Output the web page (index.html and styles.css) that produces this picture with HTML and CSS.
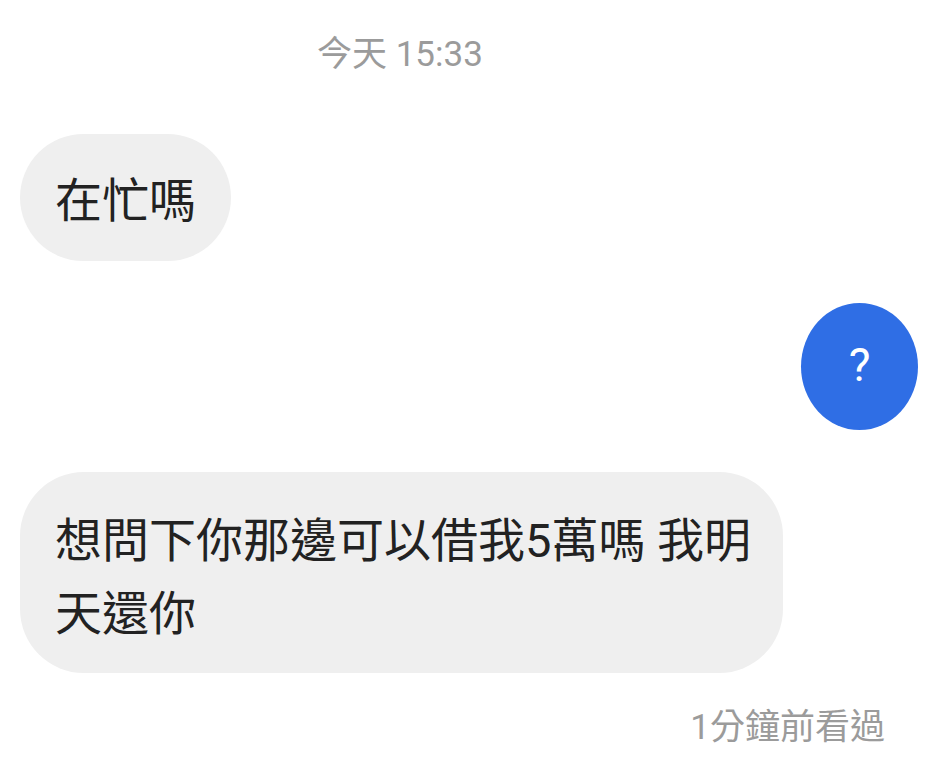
FILE: index.html
```html
<!DOCTYPE html>
<html lang="zh-Hant">
<head>
<meta charset="utf-8">
<link rel="stylesheet" href="styles.css">
</head>
<body>
<div class="chat">
  <div class="stamp">今天 15:33</div>
  <div class="row in"><div class="bubble">在忙嗎</div></div>
  <div class="row out"><div class="bubble blue">?</div></div>
  <div class="row in"><div class="bubble wide">想問下你那邊可以借我5萬嗎 我明天還你</div></div>
  <div class="seen">1分鐘前看過</div>
</div>
</body>
</html>
```
FILE: styles.css
```css
html, body {
  margin: 0;
  padding: 0;
  background: #ffffff;
}
body {
  font-family: Roboto, "Noto Sans CJK TC", sans-serif;
  width: 938px;
  height: 772px;
  overflow: hidden;
}
.chat {
  display: flex;
  flex-direction: column;
  padding: 30px 20px 0 20px;
}
.stamp {
  font-size: 35px;
  line-height: 50px;
  color: #9b9b9b;
  padding-left: 297px;
  margin-bottom: 54px;
}
.row {
  display: flex;
}
.row.out {
  justify-content: flex-end;
  margin-top: 42px;
  margin-bottom: 42px;
}
.bubble {
  background: #efefef;
  color: #222222;
  font-size: 47px;
  line-height: 71px;
  padding: 31px 35px 25px 35px;
  border-radius: 64px;
}
.bubble.wide {
  width: 700px;
  padding: 32px 28px 23px 35px;
  border-radius: 64px;
  line-height: 73px;
}
.bubble.blue {
  background: #2f6ee5;
  color: #ffffff;
  width: 117px;
  height: 127px;
  padding: 0 0 2px 0;
  box-sizing: border-box;
  border-radius: 50%;
  display: flex;
  align-items: center;
  justify-content: center;
  font-size: 46px;
  font-weight: 400;
}
.seen {
  align-self: flex-end;
  font-size: 35px;
  line-height: 50px;
  color: #9b9b9b;
  margin-top: 30px;
  margin-right: 33px;
}
```
